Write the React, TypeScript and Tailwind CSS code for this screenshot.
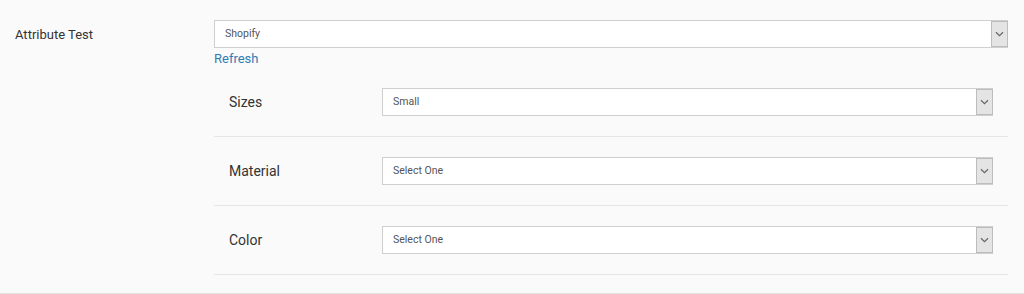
import React from 'react';

function Chevron() {
  return (
    <svg width="9" height="6" viewBox="0 0 9 6" fill="none">
      <path d="M1 1.2 L4.5 4.6 L8 1.2" stroke="#666" strokeWidth="1.2" />
    </svg>
  );
}

function FakeSelect({ value }: { value: string }) {
  return (
    <div className="flex h-[28px] w-full items-stretch border border-[#cfcfcf] bg-white">
      <span className="flex flex-1 items-center pl-[10px] text-[10.5px] text-[#555]">{value}</span>
      <span className="-mr-px flex w-[17px] items-center justify-center border border-[#bdbdbd] bg-[#e4e4e4]">
        <Chevron />
      </span>
    </div>
  );
}

const attrs = [
  { name: 'Sizes', value: 'Small' },
  { name: 'Material', value: 'Select One' },
  { name: 'Color', value: 'Select One' },
];

export default function App() {
  return (
    <div className="h-[294px] border-b border-[#e2e2e2] bg-[#fafafa] font-['Roboto',sans-serif]">
      <div className="flex pt-[20px]">
        <div className="flex h-[28px] w-[214px] items-center pl-[15px] pt-px text-[13px] text-[#333]">
          Attribute Test
        </div>
        <div className="w-[794px]">
          <FakeSelect value="Shopify" />
          <div className="h-[20px] pt-[3px] text-[13px] leading-[16px] text-[#2f7db5]">Refresh</div>
          <div>
            {attrs.map((a) => (
              <div key={a.name} className="flex items-center border-b border-[#e6e6e6] py-[20px] pr-[15px]">
                <div className="w-[168px] pl-[15px] text-[14px] text-[#333]">{a.name}</div>
                <div className="flex-1">
                  <FakeSelect value={a.value} />
                </div>
              </div>
            ))}
          </div>
        </div>
      </div>
    </div>
  );
}
